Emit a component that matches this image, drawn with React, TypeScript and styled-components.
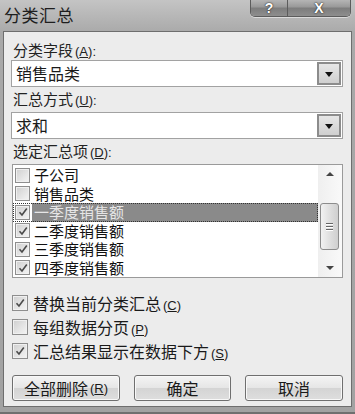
import * as React from 'react';
import styled, { createGlobalStyle } from 'styled-components';

const cjk = `"Noto Sans CJK SC", "Noto Sans", sans-serif`;

const GlobalStyle = createGlobalStyle`
    html, body {
        margin: 0;
        padding: 0;
        background: #9c9c9c;
    }
`;

const Window = styled.div`
    width: 355px;
    height: 414px;
    box-sizing: border-box;
    display: flex;
    flex-direction: column;
    background: linear-gradient(180deg, #c4c4c4 0%, #a9a9a9 8%, #a2a2a2 100%);
    border-bottom: 2px solid #6f6f6f;
    font-family: ${cjk};
    color: #1a1a1a;
    overflow: hidden;
`;

const TitleBar = styled.div`
    height: 31px;
    display: flex;
    align-items: flex-start;
    justify-content: space-between;
    padding: 0 4px 0 4px;
`;

const Title = styled.div`
    font-size: 17px;
    line-height: 17px;
    margin-top: 6px;
    color: #1e1e1e;
    letter-spacing: 0.5px;
`;

const Caption = styled.div`
    display: flex;
    height: 17px;
    margin-top: -1px;
    border: 1px solid #5c5c5c;
    border-top: none;
    border-radius: 0 0 5px 5px;
    overflow: hidden;
    box-shadow: 0 1px 0 rgba(255, 255, 255, 0.5);
`;

const CaptionButton = styled.div<{ $w: number }>`
    width: ${p => p.$w}px;
    display: flex;
    align-items: center;
    justify-content: center;
    background: linear-gradient(180deg, #b9b9b9 0%, #9a9a9a 45%, #7d7d7d 55%, #8e8e8e 100%);
    color: #fff;
    font-family: "Liberation Sans", sans-serif;
    font-weight: bold;
    font-size: 14px;
    text-shadow: 0 0 2px #333, 0 0 1px #222;

    & + & {
        border-left: 1px solid #5c5c5c;
    }
`;

const Client = styled.div`
    flex: 1;
    margin: 0 3px 5px 3px;
    border: 1px solid #6e6e6e;
    background: #ececec;
    padding: 8px 8px 0 8px;
    display: flex;
    flex-direction: column;
`;

const Label = styled.div<{ $first?: boolean }>`
    font-size: 15px;
    height: ${p => (p.$first ? 20 : 25)}px;
    line-height: ${p => (p.$first ? 20 : 24)}px;
    padding-left: 1px;
    color: #222;
    white-space: nowrap;
`;

const Key = styled.span`
    font-family: "Liberation Sans", sans-serif;
    font-size: 13px;
    margin-left: 2px;

    u {
        text-underline-offset: 1px;
    }
`;

const Combo = styled.div`
    height: 27px;
    box-sizing: border-box;
    margin-left: -1px;
    border: 1px solid #a2a2a2;
    background: #fff;
    display: flex;
    align-items: stretch;
    padding: 1px;
`;

const ComboText = styled.div`
    flex: 1;
    font-size: 16px;
    line-height: 23px;
    padding-left: 3px;
`;

const DropButton = styled.div`
    width: 24px;
    box-sizing: border-box;
    border: 2px solid #8c8c8c;
    background: linear-gradient(180deg, #e6e6e6, #cfcfcf);
    display: flex;
    align-items: center;
    justify-content: center;

    &::after {
        content: '';
        border-left: 4px solid transparent;
        border-right: 4px solid transparent;
        border-top: 5px solid #111;
        margin-top: 1px;
    }
`;

const ListBox = styled.div`
    height: 114px;
    box-sizing: border-box;
    border: 1px solid #9a9a9a;
    background: #fff;
    display: flex;
`;

const ListItems = styled.div`
    flex: 1;
    padding-top: 1px;
`;

const Item = styled.div<{ $selected?: boolean }>`
    height: 18.5px;
    display: flex;
    align-items: center;
    padding-left: 2px;
    box-sizing: border-box;
    outline: ${p => (p.$selected ? '1px dotted #333' : 'none')};
    outline-offset: -1px;
`;

const ItemText = styled.span<{ $selected?: boolean }>`
    flex: 1;
    height: 100%;
    font-size: 15px;
    line-height: 18.5px;
    padding-left: 2px;
    margin-left: 2px;
    background: ${p => (p.$selected ? '#8a8a8a' : 'transparent')};
    color: ${p => (p.$selected ? '#e6e6e6' : '#111')};
    white-space: nowrap;
`;

const Box = styled.span<{ $size?: number }>`
    width: ${p => p.$size ?? 14}px;
    height: ${p => p.$size ?? 14}px;
    flex: 0 0 auto;
    box-sizing: border-box;
    border: 1px solid #8e8e8e;
    background: linear-gradient(135deg, #cfcfcf 0%, #e6e6e6 60%, #f4f4f4 100%);
    box-shadow: inset 0 0 0 1px #f0f0f0;
    display: flex;
    align-items: center;
    justify-content: center;
`;

const Scrollbar = styled.div`
    width: 24px;
    background: linear-gradient(90deg, #efefef, #f9f9f9);
    display: flex;
    flex-direction: column;
    align-items: center;
`;

const Arrow = styled.div<{ $down?: boolean }>`
    height: 18px;
    display: flex;
    align-items: center;
    justify-content: center;

    &::after {
        content: '';
        border-left: 4px solid transparent;
        border-right: 4px solid transparent;
        ${p => (p.$down ? 'border-top: 4px solid #444;' : 'border-bottom: 4px solid #444;')}
    }
`;

const Track = styled.div`
    flex: 1;
    width: 100%;
    padding: 0 3px 0 2px;
    box-sizing: border-box;
    display: flex;
    flex-direction: column;
    justify-content: center;
`;

const Thumb = styled.div`
    height: 47px;
    margin-top: 10px;
    box-sizing: border-box;
    border: 1px solid #8c8c8c;
    border-radius: 3px;
    background: linear-gradient(90deg, #f2f2f2, #dcdcdc 60%, #cfcfcf);
    display: flex;
    flex-direction: column;
    align-items: center;
    justify-content: center;
    gap: 2px;

    span {
        width: 7px;
        height: 1px;
        background: #666;
        box-shadow: 0 1px 0 #fff;
    }
`;

const Options = styled.div`
    margin-top: 13px;
    display: flex;
    flex-direction: column;
`;

const Option = styled.div`
    height: 24px;
    display: flex;
    align-items: center;
    gap: 5px;
    font-size: 16px;
    white-space: nowrap;
`;

const Buttons = styled.div`
    margin-top: 12px;
    display: flex;
    justify-content: space-between;
`;

const Button = styled.div<{ $w: number }>`
    width: ${p => p.$w}px;
    height: 26px;
    box-sizing: border-box;
    border: 1px solid #6f6f6f;
    border-radius: 3px;
    background: linear-gradient(180deg, #f4f4f4 0%, #e6e6e6 48%, #d4d4d4 52%, #dedede 100%);
    box-shadow: inset 0 0 0 1px #f8f8f8;
    display: flex;
    align-items: center;
    justify-content: center;
    font-size: 16px;
    white-space: nowrap;
`;

const Check = () => (
    <svg width="10" height="10" viewBox="0 0 10 10">
        <path d="M1.5 5.2 L4 8 L8.8 1.5" fill="none" stroke="#4a4a4a" strokeWidth="1.6" />
    </svg>
);

const AccessKey: React.FC<{ k: string; colon?: boolean }> = ({ k, colon }) => (
    <Key>
        (<u>{k}</u>){colon ? ':' : ''}
    </Key>
);

const fields = [
    { name: '子公司', checked: false },
    { name: '销售品类', checked: false },
    { name: '一季度销售额', checked: true, selected: true },
    { name: '二季度销售额', checked: true },
    { name: '三季度销售额', checked: true },
    { name: '四季度销售额', checked: true },
];

const options = [
    { name: '替换当前分类汇总', key: 'C', checked: true },
    { name: '每组数据分页', key: 'P', checked: false },
    { name: '汇总结果显示在数据下方', key: 'S', checked: true },
];

export default function App() {
    return (
        <>
            <GlobalStyle />
            <Window>
                <TitleBar>
                    <Title>分类汇总</Title>
                    <Caption>
                        <CaptionButton $w={36}>?</CaptionButton>
                        <CaptionButton $w={62}>X</CaptionButton>
                    </Caption>
                </TitleBar>
                <Client>
                    <Label $first>
                        分类字段<AccessKey k="A" colon />
                    </Label>
                    <Combo>
                        <ComboText>销售品类</ComboText>
                        <DropButton />
                    </Combo>
                    <Label>
                        汇总方式<AccessKey k="U" colon />
                    </Label>
                    <Combo>
                        <ComboText>求和</ComboText>
                        <DropButton />
                    </Combo>
                    <Label>
                        选定汇总项<AccessKey k="D" colon />
                    </Label>
                    <ListBox>
                        <ListItems>
                            {fields.map(f => (
                                <Item key={f.name} $selected={f.selected}>
                                    <Box $size={15}>{f.checked && <Check />}</Box>
                                    <ItemText $selected={f.selected}>{f.name}</ItemText>
                                </Item>
                            ))}
                        </ListItems>
                        <Scrollbar>
                            <Arrow />
                            <Track>
                                <Thumb>
                                    <span />
                                    <span />
                                    <span />
                                </Thumb>
                            </Track>
                            <Arrow $down />
                        </Scrollbar>
                    </ListBox>
                    <Options>
                        {options.map(o => (
                            <Option key={o.name}>
                                <Box $size={16}>{o.checked && <Check />}</Box>
                                <span>
                                    {o.name}
                                    <AccessKey k={o.key} />
                                </span>
                            </Option>
                        ))}
                    </Options>
                    <Buttons>
                        <Button $w={108}>
                            全部删除<AccessKey k="R" />
                        </Button>
                        <Button $w={97}>确定</Button>
                        <Button $w={98}>取消</Button>
                    </Buttons>
                </Client>
            </Window>
        </>
    );
}
